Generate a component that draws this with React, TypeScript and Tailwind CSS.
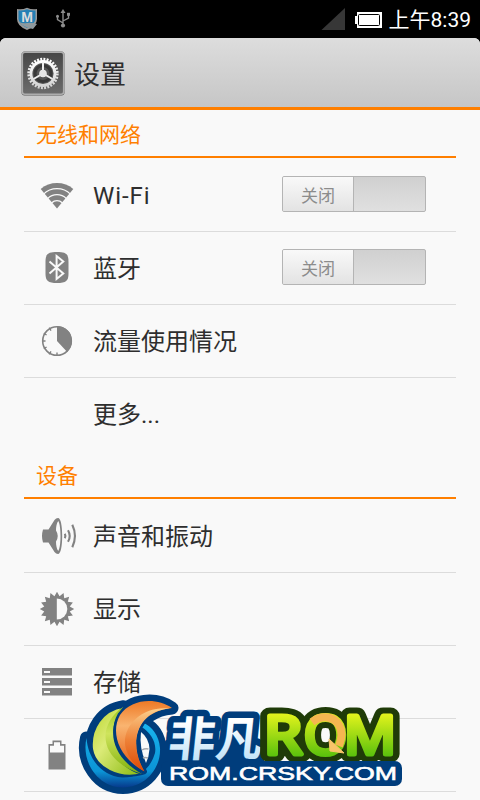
import type { ReactNode } from "react";

type Item = {
  label: string;
  icon?: ReactNode;
  toggle?: boolean;
};

// one tooth outline of a gear / sun, alternating between two radii
function burst(cx: number, cy: number, outer: number, inner: number, teeth: number) {
  return Array.from({ length: teeth * 2 }, (_, i) => {
    const r = i % 2 === 0 ? outer : inner;
    const a = (Math.PI * i) / teeth - Math.PI / 2;
    return `${(cx + r * Math.cos(a)).toFixed(2)},${(cy + r * Math.sin(a)).toFixed(2)}`;
  }).join(" ");
}

function WifiIcon() {
  return (
    <svg width="36" height="36" viewBox="0 0 36 36">
      <path d="M18 31.5L1.7 12A25.5 25.5 0 0 1 34.3 12Z" fill="#828282" />
      <g fill="none" stroke="#f9f9f9" strokeWidth="1.3">
        <circle cx="18" cy="31" r="19.3" />
        <circle cx="18" cy="31" r="13.3" />
        <circle cx="18" cy="31" r="7.4" />
      </g>
    </svg>
  );
}

function BluetoothIcon() {
  return (
    <svg width="36" height="36" viewBox="0 0 36 36">
      <path d="M18 2C27 2 29.5 4 29.5 11.5V23.5C29.5 31 27 33 18 33S6.5 31 6.5 23.5V11.5C6.5 4 9 2 18 2Z" fill="#828282" />
      <path d="M10.5 11.5L24.3 23.5L17.6 29V6L24.3 11.5L10.5 23.5" fill="none" stroke="#f9f9f9" strokeWidth="2" />
    </svg>
  );
}

function DataUsageIcon() {
  return (
    <svg width="36" height="36" viewBox="0 0 36 36">
      <circle cx="18" cy="18" r="14.3" fill="none" stroke="#828282" strokeWidth="1.6" />
      <path d="M18 18V3A15 15 0 0 1 28.2 29Z" fill="#828282" />
      <path d="M18 29.5V33M3 18H6.5M10.2 4.6L12 7.6M4.8 10.3L7.6 12M4.8 25.7L7.6 24M10.2 31.4L12 28.4" stroke="#828282" strokeWidth="1.4" />
    </svg>
  );
}

function SoundIcon() {
  return (
    <svg width="40" height="38" viewBox="0 0 40 38">
      <path d="M4 12.5H9.5L15.5 3Q17 1 19 1C21.8 1 23.2 9 23.2 19S21.8 37 19 37Q17 37 15.5 35L9.5 25.5H4Q2 19 4 12.5Z" fill="#828282" />
      <path d="M19.3 4C17.6 6 17 10 17 13.5Q20.5 19 17 24.5C17 28 17.6 32 19.3 34C21 31 21.5 25 21.5 19S21 7 19.3 4Z" fill="#f9f9f9" />
      <g fill="none" stroke="#828282" strokeWidth="2.1">
        <path d="M25.8 16.8Q27 19 25.8 21.2" />
        <path d="M29 13.2Q32.4 19 29 24.8" />
        <path d="M33.3 7.8Q38.6 19 33.3 30.2" />
      </g>
    </svg>
  );
}

function DisplayIcon() {
  return (
    <svg width="36" height="36" viewBox="0 0 36 36">
      <polygon points={burst(18, 18, 17.2, 13, 16)} fill="#828282" />
      <path d="M17.8 7.5A10.5 10.5 0 0 1 17.8 28.5Z" fill="#f9f9f9" />
    </svg>
  );
}

function StorageIcon() {
  return (
    <svg width="36" height="36" viewBox="0 0 36 36">
      {[4, 14, 24].map((y) => (
        <g key={y}>
          <rect x="3" y={y} width="30" height="7.5" fill="#828282" />
          <rect x="5" y={y + 3} width="6" height="2" fill="#f9f9f9" />
        </g>
      ))}
    </svg>
  );
}

function BatteryIcon() {
  return (
    <svg width="36" height="36" viewBox="0 0 36 36">
      <path d="M9.5 7H13.5V3.5H22.5V7H26.5V32.5H9.5Z" fill="#828282" />
      <path d="M11 15.5V8.7H15V5.2H21V8.7H25V15.5Z" fill="#f9f9f9" />
    </svg>
  );
}

function SettingsIcon() {
  return (
    <svg width="44" height="46" viewBox="0 0 44 46">
      <defs>
        <linearGradient id="tile" x1="0" y1="0" x2="0" y2="1">
          <stop offset="0" stopColor="#464646" />
          <stop offset="1" stopColor="#6c6c6c" />
        </linearGradient>
        <linearGradient id="gear" x1="0" y1="0" x2="0" y2="1">
          <stop offset="0" stopColor="#ffffff" />
          <stop offset="1" stopColor="#d4d4d4" />
        </linearGradient>
      </defs>
      <rect x="0.5" y="0.5" width="43" height="44" rx="3" fill="#5a5a5a" />
      <rect x="1.3" y="1.2" width="41.4" height="42" rx="2.5" fill="url(#tile)" stroke="#adadad" strokeWidth="1.6" />
      <circle cx="22" cy="22.5" r="12.5" fill="#555" />
      <circle cx="22" cy="22.5" r="14.2" fill="none" stroke="url(#gear)" strokeWidth="3" strokeDasharray="1.9 1.287" />
      <circle cx="22" cy="22.5" r="12" fill="none" stroke="url(#gear)" strokeWidth="2.8" />
      <circle cx="22" cy="22.5" r="8" fill="none" stroke="#383838" strokeWidth="3" />
      <path d="M22 22.5V11.5M22 22.5L12.5 28M22 22.5L31.5 28" stroke="#eee" strokeWidth="2" />
      <circle cx="22" cy="22.5" r="3.8" fill="#e6e6e6" />
    </svg>
  );
}

function StatusBar() {
  return (
    <div className="flex h-[38px] items-center bg-black pl-4 pr-[9px]">
      <svg width="22" height="24" viewBox="0 0 22 24">
        <path d="M1 2Q6 3 11 .8Q16 3 21 2V12Q21 19 11 23Q1 19 1 12Z" fill="#999" />
        <path d="M2.5 3.5Q7 4 11 2.3Q15 4 19.5 3.5V12Q19 17 11 21Q3 17 2.5 12Z" fill="#2480b5" />
        <path d="M3 15Q7 17 11 16Q16 15 21 17L17 22L11 20.5Q6 19 3 15Z" fill="#8e999e" />
        <text x="11" y="14.5" textAnchor="middle" className="font-['Liberation_Sans'] text-[14px] font-bold" fill="#ddd">M</text>
      </svg>
      <svg className="ml-[17px]" width="16" height="20" viewBox="0 0 16 20" fill="none" stroke="#8c8c8c" strokeWidth="1.4">
        <path d="M8 3V16M8 14L2.5 10.5V7M8 12L13.5 9V6" />
        <path d="M8 0L10.5 4H5.5Z" fill="#8c8c8c" stroke="none" />
        <circle cx="8" cy="16.5" r="2.1" fill="#8c8c8c" stroke="none" />
        <circle cx="2.5" cy="7.2" r="1.5" fill="#8c8c8c" stroke="none" />
        <path d="M12 3.8H15V6.8H12Z" fill="#8c8c8c" stroke="none" />
      </svg>
      <svg className="ml-auto" width="24" height="22" viewBox="0 0 24 22">
        <path d="M24 0V22H0.5Z" fill="#373737" />
      </svg>
      <svg className="ml-[10px] mt-0.5" width="29" height="16" viewBox="0 0 29 16">
        <path d="M2 0H27V16H2V12H0V4H2Z" fill="#fff" />
        <rect x="3.5" y="2.5" width="21" height="11" rx="1" fill="none" stroke="#000" />
      </svg>
      <span className="ml-[5px] mt-[3px] whitespace-nowrap text-[21px] leading-none text-white">上午8:39</span>
    </div>
  );
}

function Toggle() {
  return (
    <div className="mb-0.5 mr-[30px] flex h-9 w-36 overflow-hidden rounded-[2px] border border-[#b4b4b4] bg-linear-to-b from-[#d0d0d0] to-[#e0e0e0]">
      <div className="flex w-[71px] items-center justify-center border-r border-[#b4b4b4] bg-linear-to-b from-[#f9f9f9] to-[#e3e3e3] pt-1.5 text-[17px] text-[#8c8c8c]">
        关闭
      </div>
    </div>
  );
}

function Section({ title, items }: { title: string; items: Item[] }) {
  return (
    <section className="px-6">
      <h2 className="mb-px flex h-12 items-center border-b-2 border-[#ff7f00] pl-3 pt-1.5 text-[21px] text-[#ff7f00]">
        {title}
      </h2>
      <ul>
        {items.map((item) => (
          <li
            key={item.label}
            className={`flex h-[73px] items-center border-b ${item.icon ? "border-[#dcdcdc]" : "border-transparent"}`}
          >
            <span className="ml-[15px] flex w-[54px]">{item.icon}</span>
            <span className={`flex-1 pt-0.5 text-2xl text-[#2e2e2e] ${item.label === "Wi-Fi" ? "tracking-[0.9px]" : ""}`}>
              {item.label}
            </span>
            {item.toggle && <Toggle />}
          </li>
        ))}
      </ul>
    </section>
  );
}

const GREEN_LEAF = "M123.5 706.7C102 710 90 729 92 749C95 768 119 780 142 774C116 766 95 736 123.5 706.7Z";
const GREEN_SHADE = "M123.5 706.7C97 724 97 760 142 774C113 758 104 730 123.5 706.7Z";
const ORANGE_LEAF = "M172 708C156 697 131 699 120 715C110 733 119 758 144.5 771.5C130 748 132 712 172 708Z";
const ORANGE_SHADE = "M170 708.5C140 705 118 730 127 752C131 762 138 768 144 771C130 748 132 712 170 708.5Z";
const BLUE_RING = "M86.5 738C81 762 98 787.5 123 787.5C146 787 161 768 160 748C159 735 152 727 144 723L141.5 727C150 732 157 742 155 753C150 770 138 778 122 777.5C102 776 88 759 86.5 738Z";
const NAVY = "#003d7c";

function Watermark() {
  return (
    <svg className="absolute bottom-0 left-[70px]" width="340" height="110" viewBox="70 690 340 110">
      <defs>
        <linearGradient id="leaf" x1="0" y1="0" x2="1" y2="1">
          <stop offset="0" stopColor="#b9d52a" />
          <stop offset="0.4" stopColor="#dceb78" />
          <stop offset="1" stopColor="#86b80c" />
        </linearGradient>
        <linearGradient id="leafShade" x1="0" y1="0" x2="0" y2="1">
          <stop offset="0" stopColor="#9cc820" />
          <stop offset="0.4" stopColor="#cfe45c" />
          <stop offset="1" stopColor="#7fb00a" />
        </linearGradient>
        <linearGradient id="flame" x1="0" y1="0" x2="0" y2="1">
          <stop offset="0" stopColor="#ee7a26" />
          <stop offset="0.35" stopColor="#f9b470" />
          <stop offset="1" stopColor="#e45409" />
        </linearGradient>
        <linearGradient id="flameShade" x1="0" y1="0" x2="0" y2="1">
          <stop offset="0" stopColor="#fbd08e" />
          <stop offset="0.5" stopColor="#ee8238" />
          <stop offset="1" stopColor="#dc4a06" />
        </linearGradient>
        <linearGradient id="ring" x1="0" y1="0" x2="0" y2="1">
          <stop offset="0" stopColor="#18b4ee" />
          <stop offset="0.75" stopColor="#0b94d6" />
          <stop offset="1" stopColor="#063a8c" />
        </linearGradient>
        <linearGradient id="ice" x1="0" y1="0" x2="0" y2="1">
          <stop offset="0.3" stopColor="#ffffff" />
          <stop offset="1" stopColor="#b4dcf6" />
        </linearGradient>
        <linearGradient id="lime" gradientUnits="userSpaceOnUse" x1="0" y1="714" x2="0" y2="757">
          <stop offset="0" stopColor="#e2f31c" />
          <stop offset="1" stopColor="#58c00c" />
        </linearGradient>
      </defs>

      <g fill={NAVY} stroke={NAVY} strokeWidth="13" strokeLinejoin="round">
        <path d={GREEN_LEAF} />
        <path d={ORANGE_LEAF} />
        <path d={BLUE_RING} />
      </g>
      {/* gap between the orange leaf and the ring */}
      <path d="M141 732Q149 738 149.5 749Q149 757 146 763Q139 748 141 732Z" fill="#f9f9f9" />
      <path d="M142 750Q145 748 148.5 749M143 758Q145 757 148 758" fill="none" stroke="#a5a9ae" strokeWidth="1.5" />
      <path d={BLUE_RING} fill="url(#ring)" />
      <path d={GREEN_LEAF} fill="url(#leaf)" stroke={NAVY} strokeWidth="2" />
      <path d={GREEN_SHADE} fill="url(#leafShade)" />
      <path d={ORANGE_LEAF} fill={NAVY} stroke={NAVY} strokeWidth="5" strokeLinejoin="round" />
      <path d={ORANGE_LEAF} fill="url(#flame)" />
      <path d={ORANGE_SHADE} fill="url(#flameShade)" />

      <rect x="164" y="745" width="100" height="20" fill={NAVY} />
      <g
        className="font-['Noto_Sans_CJK_SC',sans-serif] text-[47px] font-bold"
        transform="translate(167 755.5) skewX(-6)"
        strokeLinejoin="round"
      >
        <text textLength="94" fill={NAVY} stroke={NAVY} strokeWidth="13">非凡</text>
        <text textLength="94" fill="url(#ice)">非凡</text>
      </g>
      <g className="font-['Open_Sans',sans-serif] text-[53px] font-normal" strokeLinejoin="round" strokeLinecap="round">
        <g fill="#1f3b08" stroke="#1f3b08" strokeWidth="17">
          <text x="264" y="754" textLength="38" lengthAdjust="spacingAndGlyphs">R</text>
          <text x="304" y="754" textLength="43" lengthAdjust="spacingAndGlyphs">O</text>
          <text x="344" y="754" textLength="52" lengthAdjust="spacingAndGlyphs">M</text>
        </g>
        <g fill="url(#lime)" stroke="url(#lime)" strokeWidth="5">
          <text x="264" y="754" textLength="38" lengthAdjust="spacingAndGlyphs">R</text>
          <text x="304" y="754" textLength="43" lengthAdjust="spacingAndGlyphs">O</text>
          <text x="344" y="754" textLength="52" lengthAdjust="spacingAndGlyphs">M</text>
        </g>
      </g>
      <path d="M312 722C323 714 334 717 339 725Q344 733 339 746" fill="none" stroke="#f5b650" strokeWidth="8" />
      <path d="M329 739L344 753L330 751Z" fill="#f8c469" stroke="#f8c469" />
      <rect x="161" y="761" width="241" height="25" rx="7" fill={NAVY} />
      <text
        x="169"
        y="779.5"
        textLength="228"
        lengthAdjust="spacingAndGlyphs"
        className="font-['Liberation_Sans',sans-serif] text-[18.5px]"
        fill="#fff"
        stroke="#fff"
        strokeWidth="0.6"
      >
        ROM.CRSKY.COM
      </text>
    </svg>
  );
}

const NETWORK: Item[] = [
  { label: "Wi-Fi", icon: <WifiIcon />, toggle: true },
  { label: "蓝牙", icon: <BluetoothIcon />, toggle: true },
  { label: "流量使用情况", icon: <DataUsageIcon /> },
  { label: "更多..." },
];

const DEVICE: Item[] = [
  { label: "声音和振动", icon: <SoundIcon /> },
  { label: "显示", icon: <DisplayIcon /> },
  { label: "存储", icon: <StorageIcon /> },
  { label: "电池", icon: <BatteryIcon /> },
];

export default function App() {
  return (
    <div className="relative flex h-[800px] w-[480px] flex-col overflow-hidden bg-black font-[Roboto,'Noto_Sans_CJK_SC',sans-serif]">
      <StatusBar />
      <div className="min-h-0 flex-1 overflow-hidden rounded-t-md bg-[#f9f9f9]">
        <header className="flex h-18 items-center border-b-3 border-[#ff7f00] bg-linear-to-b from-[#dddddd] to-[#c6c6c6] pl-[21px] pt-0.5">
          <SettingsIcon />
          <h1 className="ml-[9px] pt-1 text-[26px] text-[#2e2e2e]">设置</h1>
        </header>
        <Section title="无线和网络" items={NETWORK} />
        <Section title="设备" items={DEVICE} />
      </div>
      <Watermark />
    </div>
  );
}
